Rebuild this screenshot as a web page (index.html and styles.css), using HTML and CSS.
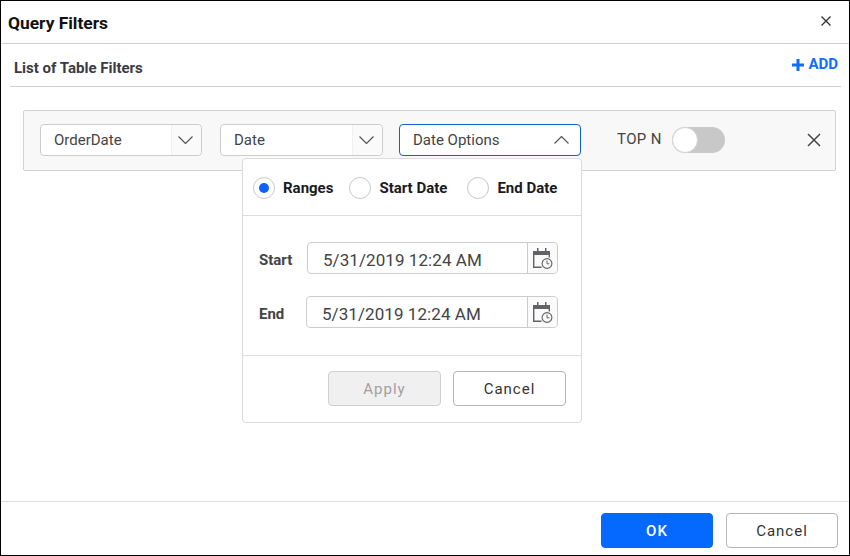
FILE: index.html
```html
<!DOCTYPE html>
<html lang="en">
<head>
<meta charset="utf-8">
<title>Query Filters</title>
<link rel="stylesheet" href="styles.css">
</head>
<body>
<div class="dialog">
  <header class="dialog-head">
    <h1 class="dialog-title">Query Filters</h1>
    <svg class="head-close" width="10" height="10" viewBox="0 0 10 10"><path d="M.5.5l9 9M9.5.5l-9 9" stroke="#333" stroke-width="1.4" fill="none"/></svg>
  </header>
  <main class="dialog-body">
    <div class="list-head">
      <h2 class="list-title">List of Table Filters</h2>
      <div class="add"><svg width="12" height="12" viewBox="0 0 12 12"><path d="M6 0v12M0 6h12" stroke="#0d6efd" stroke-width="3" fill="none"/></svg><span>ADD</span></div>
    </div>
    <div class="filter-row">
      <div class="select select-a"><span class="select-text">OrderDate</span><span class="select-btn"><svg width="15" height="8" viewBox="0 0 15 8"><path d="M.5.5l7 7 7-7" stroke="#555" stroke-width="1.200" fill="none"/></svg></span></div>
      <div class="select select-b"><span class="select-text">Date</span><span class="select-btn"><svg width="15" height="8" viewBox="0 0 15 8"><path d="M.5.5l7 7 7-7" stroke="#555" stroke-width="1.200" fill="none"/></svg></span></div>
      <div class="select select-c"><span class="select-text">Date Options</span><span class="select-arrow"><svg width="15" height="8" viewBox="0 0 15 8"><path d="M.5 7.500l7-7 7 7" stroke="#555" stroke-width="1.200" fill="none"/></svg></span></div>
      <div class="topn"><span class="topn-label">TOP N</span><span class="toggle"><span class="knob"></span></span></div>
      <svg class="row-close" width="14" height="14" viewBox="0 0 14 14"><path d="M1 1l12 12M13 1L1 13" stroke="#444" stroke-width="1.500" fill="none"/></svg>
      <div class="popup">
        <div class="radios">
          <label class="radio radio-1"><span class="dot dot-on"></span>Ranges</label>
          <label class="radio radio-2"><span class="dot"></span>Start Date</label>
          <label class="radio"><span class="dot"></span>End Date</label>
        </div>
        <div class="dates">
          <div class="date-row">
            <span class="date-label label-start">Start</span>
            <div class="date-input"><span class="date-text">5/31/2019 12:24 AM</span><span class="date-btn"><svg width="20" height="21" viewBox="0 0 20 21"><path d="M0 3h17v4H0zM4 0h1.500v3H4zM12 0h1.500v3H12z" fill="#626266"/><path d="M.7 7v12.300h7.800M16.300 7v2.500" stroke="#626266" stroke-width="1.400" fill="none"/><circle cx="14" cy="15.500" r="4.900" stroke="#626266" stroke-width="1.100" fill="#fafafa"/><path d="M14 12.500v3.300h2.400" stroke="#626266" stroke-width="1" fill="none"/></svg></span></div>
          </div>
          <div class="date-row">
            <span class="date-label label-end">End</span>
            <div class="date-input date-input-end"><span class="date-text">5/31/2019 12:24 AM</span><span class="date-btn"><svg width="20" height="21" viewBox="0 0 20 21"><path d="M0 3h17v4H0zM4 0h1.500v3H4zM12 0h1.500v3H12z" fill="#626266"/><path d="M.7 7v12.300h7.800M16.300 7v2.500" stroke="#626266" stroke-width="1.400" fill="none"/><circle cx="14" cy="15.500" r="4.900" stroke="#626266" stroke-width="1.100" fill="#fafafa"/><path d="M14 12.500v3.300h2.400" stroke="#626266" stroke-width="1" fill="none"/></svg></span></div>
          </div>
        </div>
        <div class="popup-foot">
          <button class="btn btn-small btn-disabled">Apply</button>
          <button class="btn btn-small">Cancel</button>
        </div>
      </div>
    </div>
  </main>
  <footer class="dialog-foot">
    <button class="btn btn-large btn-primary">OK</button>
    <button class="btn btn-large">Cancel</button>
  </footer>
</div>
</body>
</html>
```

FILE: styles.css
```css
* { box-sizing: border-box; }
html, body { margin: 0; height: 100%; }
body { font-family: Roboto, "Liberation Sans", sans-serif; color: #333; background: #fff; }
.dialog { width: 850px; height: 556px; border: 1px solid #000; display: flex; flex-direction: column; background: #fff; overflow: hidden; }
.dialog-head { height: 43px; flex: none; border-bottom: 1px solid #cfcfcf; display: flex; align-items: center; justify-content: space-between; padding: 0 18px 0 7px; }
.dialog-title { margin: 2px 0 0; font-size: 17.4px; font-weight: 700; color: #111; line-height: 20px; }
.head-close { margin-bottom: 2px; }
.dialog-body { flex: 1; padding: 0 8px 0 9px; }
.list-head { height: 43px; border-bottom: 1px solid #d0d0d0; display: flex; justify-content: space-between; align-items: flex-start; padding: 0 3px 0 4px; }
.list-title { margin: 16px 0 0; font-size: 15px; font-weight: 700; line-height: 17px; color: #3a3a46; }
.add { margin-top: 12px; display: flex; align-items: center; gap: 4px; font-size: 15px; font-weight: 700; line-height: 17px; color: #0d6efd; }
.filter-row { position: relative; margin: 23px 5px 0 13px; height: 61px; border: 1px solid #d2d2d2; border-radius: 2px; background: #f8f8f8; display: flex; align-items: flex-start; padding: 13px 0 0 16px; }
.select { height: 32px; background: #fff; border: 1px solid #ccc; border-radius: 4px; display: flex; align-items: center; font-size: 15px; color: #444; flex: none; }
.select-a { width: 162px; margin-right: 18px; }
.select-b { width: 163px; margin-right: 16px; }
.select-c { width: 182px; border-color: #0d62d8; margin-right: 36px; }
.select-text { flex: 1; padding-left: 13px; }
.select-btn { width: 30px; height: 100%; background: #fafafa; border-left: 1px solid #f1f1f1; border-radius: 0 4px 4px 0; display: flex; align-items: center; justify-content: center; padding-right: 3px; }
.select-arrow { width: 34px; display: flex; justify-content: center; padding-right: 4px; }
.topn { display: flex; align-items: center; height: 30px; gap: 10px; margin-top: 1px; }
.topn-label { font-size: 15px; letter-spacing: .4px; color: #444; margin-top: -3px; }
.toggle { width: 53px; height: 26px; background: #c8c8c8; border-radius: 13px; position: relative; display: block; }
.knob { position: absolute; left: 0; top: 0; width: 26px; height: 26px; background: #fff; border: 1px solid #d4d4d4; border-radius: 50%; }
.row-close { position: absolute; top: 22px; right: 14px; }
.popup { position: absolute; left: 218px; top: 47px; width: 340px; height: 265px; background: #fff; border: 1px solid #dcdcdc; border-radius: 4px; display: flex; flex-direction: column; z-index: 2; }
.radios { height: 57px; flex: none; border-bottom: 1px solid #dedede; display: flex; align-items: center; padding: 1px 0 0 10px; }
.radio { display: flex; align-items: center; gap: 8px; font-size: 15px; font-weight: 700; color: #1a1a22; line-height: 16px; }
.radio-1 { margin-right: 16px; }
.radio-2 { margin-right: 20px; }
.dot { width: 22px; height: 22px; border: 1px solid #c8c8c8; border-radius: 50%; background: #fff; display: flex; align-items: center; justify-content: center; }
.dot-on::after { content: ""; width: 10px; height: 10px; border-radius: 50%; background: #0d62fd; }
.dates { height: 140px; flex: none; border-bottom: 1px solid #dedede; padding: 26px 0 0 15px; display: flex; flex-direction: column; gap: 22px; }
.date-row { display: flex; align-items: center; height: 32px; }
.date-label { font-size: 15px; font-weight: 700; color: #444; padding: 3px 0 0 1px; }
.label-start { width: 49px; }
.label-end { width: 48px; }
.date-input { width: 251px; height: 32px; border: 1px solid #ccc; border-radius: 4px; display: flex; align-items: center; background: #fff; }
.date-input-end { width: 252px; }
.date-text { flex: 1; padding: 4px 0 0 15px; font-size: 17px; letter-spacing: .07px; color: #444; }
.date-btn { width: 30px; height: 100%; flex: none; background: #fafafa; border-left: 1px solid #ccc; border-radius: 0 4px 4px 0; display: flex; align-items: center; justify-content: center; }
.popup-foot { flex: 1; display: flex; justify-content: flex-end; gap: 12px; padding: 15px 15px 0 0; }
.btn { font-family: Roboto, "Liberation Sans", sans-serif; background: #fff; border: 1px solid #b5b5b5; border-radius: 4px; color: #333; padding: 0; font-size: 15px; letter-spacing: 1px; }
.btn-small { width: 113px; height: 35px; }
.btn-disabled { background: #f0f0f0; border-color: #d0d0d0; color: #a0a0a0; }
.dialog-foot { height: 54px; flex: none; border-top: 1px solid #dcdcdc; display: flex; justify-content: flex-end; gap: 13px; padding: 11px 11px 0 0; }
.btn-large { width: 112px; height: 35px; }
.btn-primary { background: #0569ff; border-color: #0569ff; color: #fff; font-weight: 500; }
```
